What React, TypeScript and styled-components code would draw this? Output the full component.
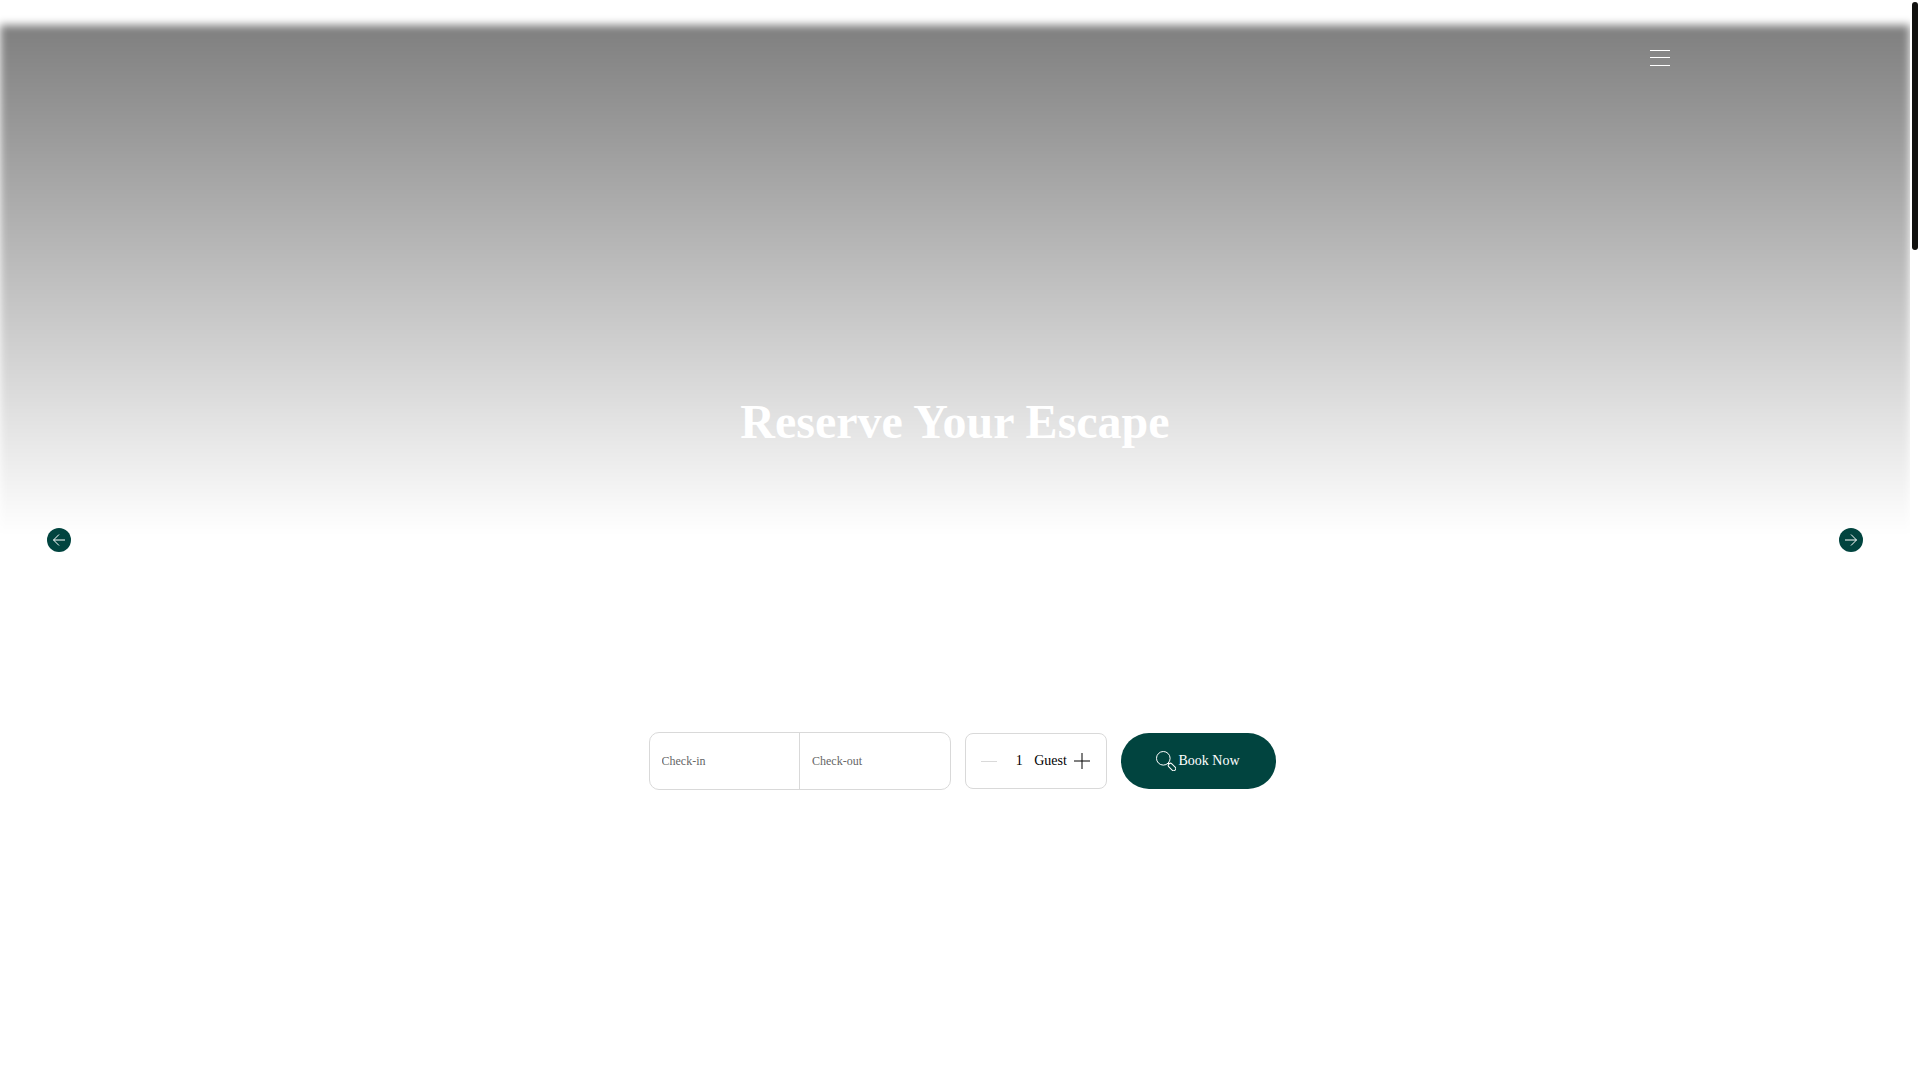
import React, { useState } from "react";
import styled, { createGlobalStyle } from "styled-components";

const GlobalStyle = createGlobalStyle`
  *, *::before, *::after { box-sizing: border-box; }
  body {
    margin: 0;
    background: #fff;
    color: #000;
    font-family: "Liberation Serif", "Times New Roman", serif;
  }
  button, input { font-family: inherit; }
`;

const Page = styled.div`
  display: grid;
  grid-template-columns: minmax(0, 1fr) 10px;
  min-height: 100vh;
`;

const Hero = styled.main`
  position: relative;
  display: grid;
  grid-template-rows: 1fr auto 1fr;
  overflow: hidden;
`;

const Shade = styled.div`
  position: absolute;
  top: 25px;
  left: 0;
  right: 0;
  height: calc(50vh - 30px);
  background: linear-gradient(rgba(0, 0, 0, 0.5), rgba(0, 0, 0, 0));
  filter: blur(4px);
`;

const Top = styled.div`
  position: relative;
  display: flex;
  flex-direction: column;
  justify-content: space-between;
  padding: 48px 24px 78px;
`;

const Header = styled.header`
  display: flex;
  justify-content: flex-end;
  width: 100%;
  max-width: 1430px;
  margin: 0 auto;
`;

const IconButton = styled.button`
  display: flex;
  align-items: center;
  justify-content: center;
  padding: 0;
  border: 0;
  background: none;
  color: inherit;
  cursor: pointer;

  &:disabled {
    color: #d9d9d9;
    cursor: default;
  }
`;

const MenuButton = styled(IconButton)`
  color: #fff;
`;

const Title = styled.h1`
  margin: 0;
  color: #fff;
  font-size: 48px;
  font-weight: 700;
  line-height: 56px;
  text-align: center;
`;

const SlideNav = styled.nav`
  position: relative;
  display: flex;
  justify-content: space-between;
  padding: 0 47px;
`;

const SlideButton = styled(IconButton)`
  width: 24px;
  height: 24px;
  border-radius: 50%;
  background: #01443f;
  color: #fff;
`;

const Bottom = styled.div`
  position: relative;
  padding: 180px 24px 48px;
`;

const BookingForm = styled.form`
  display: flex;
  align-items: center;
  justify-content: center;
  gap: 14px;
  padding-left: 14px;
`;

const Dates = styled.div`
  display: flex;
  width: 302px;
  height: 58px;
  border: 1px solid #d9d9d9;
  border-radius: 10px;
  overflow: hidden;
`;

const DateInput = styled.input`
  flex: 1;
  min-width: 0;
  padding: 0 12px;
  border: 0;
  background: none;
  color: #000;
  font-size: 12px;
  outline: none;

  & + & { border-left: 1px solid #d9d9d9; }
  &::placeholder { color: #666; opacity: 1; }
`;

const Guests = styled.div`
  display: flex;
  align-items: center;
  justify-content: space-between;
  width: 142px;
  height: 56px;
  padding: 0 15px;
  border: 1px solid #d9d9d9;
  border-radius: 8px;
  font-size: 14px;
`;

const GuestCount = styled.div`
  display: flex;
`;

const Count = styled.output`
  width: 30px;
  text-align: center;
`;

const BookButton = styled.button`
  display: flex;
  align-items: center;
  justify-content: center;
  gap: 2px;
  width: 155px;
  height: 56px;
  padding: 0;
  border: 0;
  border-radius: 28px;
  background: #01443f;
  color: #fff;
  font-size: 14px;
  cursor: pointer;
`;

const ScrollTrack = styled.div`
  padding: 2px;
  background: #fff;
`;

const ScrollThumb = styled.div`
  width: 6px;
  height: 248px;
  border-radius: 3px;
  background: #11110f;
`;

const MenuIcon = () => (
  <svg width="20" height="20" viewBox="0 0 20 20" fill="currentColor" aria-hidden="true">
    <path d="M0 2h20v1H0zM0 9h20v1H0zM0 17h20v1H0z" />
  </svg>
);

const ArrowIcon = ({ right }: { right?: boolean }) => (
  <svg width="12" height="12" viewBox="0 0 12 12" fill="none" stroke="currentColor" aria-hidden="true">
    <path d={right ? "M0 6h11.5M6 .5 11.5 6 6 11.5" : "M12 6H.5M6 .5.5 6 6 11.5"} />
  </svg>
);

const MinusIcon = () => (
  <svg width="16" height="16" viewBox="0 0 16 16" fill="none" stroke="currentColor" aria-hidden="true">
    <path d="M0 8.5h16" />
  </svg>
);

const PlusIcon = () => (
  <svg width="16" height="16" viewBox="0 0 16 16" fill="none" stroke="currentColor" aria-hidden="true">
    <path d="M0 8h16M8 0v16" />
  </svg>
);

const SearchIcon = () => (
  <svg width="20" height="20" viewBox="0 0 20 20" fill="none" stroke="currentColor" aria-hidden="true">
    <circle cx="7.3" cy="7.3" r="6.8" />
    <path d="m12 12 1.2 1.2" />
    <rect x="11.6" y="13.9" width="8.8" height="4.2" rx="2.1" transform="rotate(45 16 16)" />
  </svg>
);

export default function App() {
  const [guests, setGuests] = useState(1);

  return (
    <>
      <GlobalStyle />
      <Page>
        <Hero>
          <Shade />
          <Top>
            <Header>
              <MenuButton type="button" aria-label="Open menu">
                <MenuIcon />
              </MenuButton>
            </Header>
            <Title>Reserve Your Escape</Title>
          </Top>
          <SlideNav aria-label="Slides">
            <SlideButton type="button" aria-label="Previous slide">
              <ArrowIcon />
            </SlideButton>
            <SlideButton type="button" aria-label="Next slide">
              <ArrowIcon right />
            </SlideButton>
          </SlideNav>
          <Bottom>
            <BookingForm onSubmit={(e) => e.preventDefault()}>
              <Dates>
                <DateInput type="text" placeholder="Check-in" aria-label="Check-in" />
                <DateInput type="text" placeholder="Check-out" aria-label="Check-out" />
              </Dates>
              <Guests>
                <IconButton
                  type="button"
                  aria-label="Remove guest"
                  disabled={guests === 1}
                  onClick={() => setGuests(guests - 1)}
                >
                  <MinusIcon />
                </IconButton>
                <GuestCount>
                  <Count>{guests}</Count>
                  <span>Guest</span>
                </GuestCount>
                <IconButton type="button" aria-label="Add guest" onClick={() => setGuests(guests + 1)}>
                  <PlusIcon />
                </IconButton>
              </Guests>
              <BookButton type="submit">
                <SearchIcon />
                Book Now
              </BookButton>
            </BookingForm>
          </Bottom>
        </Hero>
        <ScrollTrack>
          <ScrollThumb />
        </ScrollTrack>
      </Page>
    </>
  );
}
